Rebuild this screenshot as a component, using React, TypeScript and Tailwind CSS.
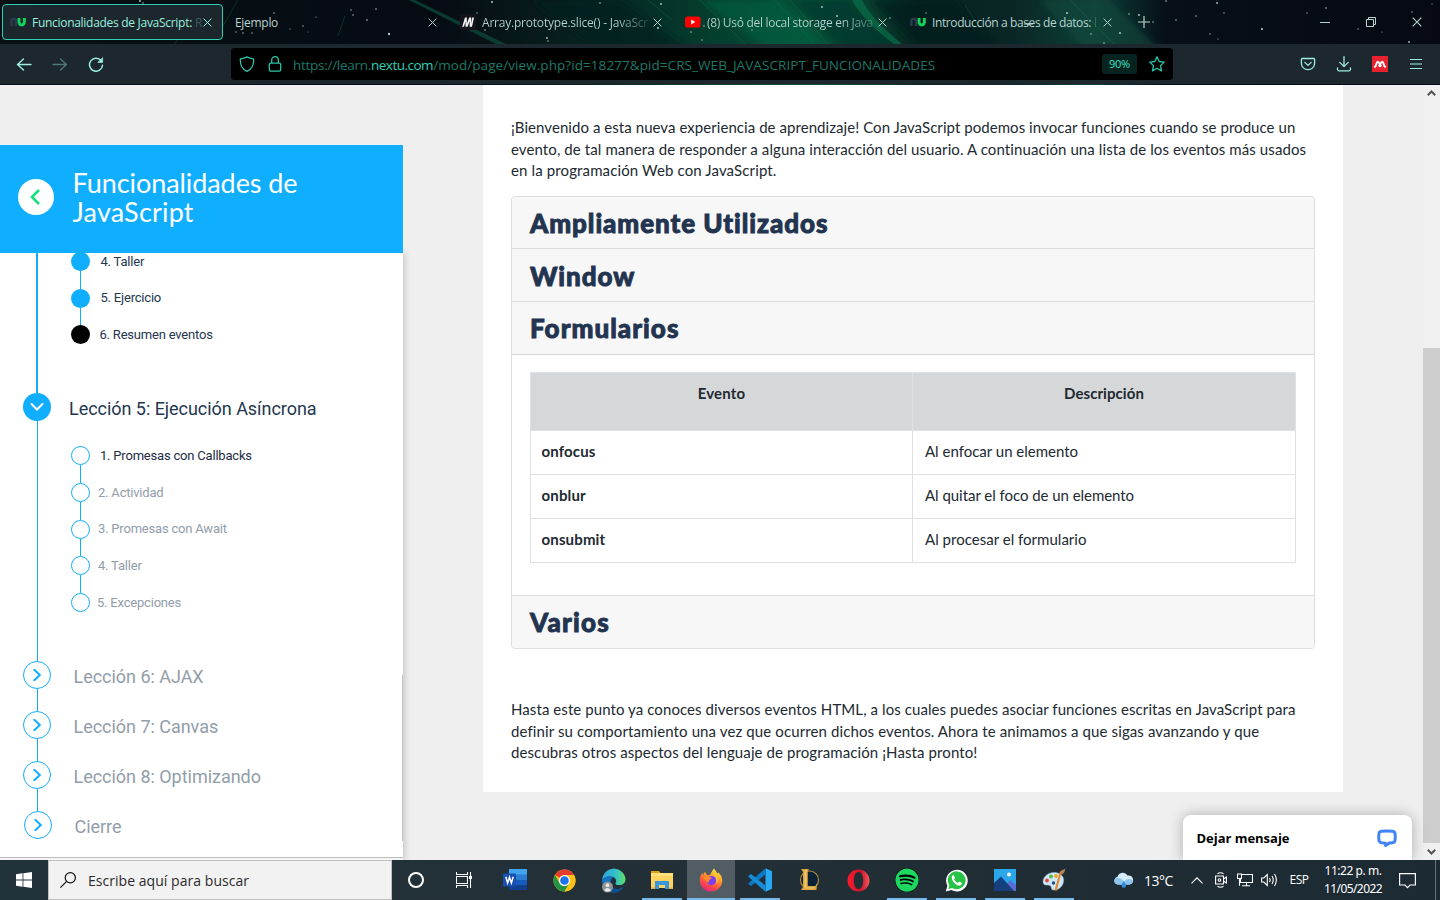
import type { ReactNode } from "react";
import { FaSpotify } from "react-icons/fa6";

const segoe = "font-['Open_Sans','Noto_Sans',sans-serif]";

/* ---------- Browser window ---------- */

const stars: [number, number, number][] = [
  [140, 1, 1.2], [143, 3, 0.9], [274, 13, 0.9], [290, 29, 0.7], [303, 26, 0.8], [316, 17, 0.7], [351, 10, 0.9], [353, 15, 0.9],
  [367, 20, 1], [376, 9, 1], [389, 34, 1.5], [236, 32, 0.8], [243, 33, 0.9], [252, 33, 0.8], [308, 32, 0.6], [492, 2, 1.3], [477, 13, 0.8],
  [485, 30, 1], [547, 38, 1.1], [548, 41, 0.9], [600, 3, 1], [661, 4, 1.2], [658, 28, 1.3], [691, 32, 1], [704, 26, 1], [741, 18, 1.2],
  [702, 40, 0.9], [752, 30, 0.8], [822, 7, 1.2], [837, 16, 1.2], [890, 18, 0.9], [926, 13, 0.8], [1029, 24, 1.2], [1067, 13, 1.3],
  [1091, 34, 0.9], [1120, 33, 1.3], [1104, 43, 1], [1129, 14, 1], [1139, 15, 1.2], [1153, 22, 0.9], [1166, 1, 1], [1176, 20, 0.9],
  [1196, 16, 0.9], [1217, 3, 1.1], [1224, 13, 0.8], [1210, 34, 0.8], [1218, 39, 0.7], [1262, 29, 1.4], [1307, 13, 0.8], [1326, 8, 1],
  [1358, 29, 0.8], [1382, 32, 0.7], [1412, 12, 0.8], [1409, 42, 1.1], [1432, 4, 0.7],
];

function Aurora() {
  return (
    <svg className="absolute inset-0 h-[85px] w-[1440px]" viewBox="0 0 1440 85" preserveAspectRatio="none" aria-hidden="true">
      <defs>
        <linearGradient id="sky" x1="0" x2="1" y1="0" y2="0">
          <stop offset="0" stopColor="#071014" />
          <stop offset="0.3" stopColor="#060b13" />
          <stop offset="0.36" stopColor="#071719" />
          <stop offset="0.44" stopColor="#052c26" />
          <stop offset="0.5" stopColor="#04402f" />
          <stop offset="0.56" stopColor="#055037" />
          <stop offset="0.605" stopColor="#07402f" />
          <stop offset="0.64" stopColor="#072421" />
          <stop offset="0.7" stopColor="#0a2525" />
          <stop offset="0.76" stopColor="#0b4037" />
          <stop offset="0.81" stopColor="#070f17" />
          <stop offset="1" stopColor="#060912" />
        </linearGradient>
        <filter id="soft" x="-5%" y="-20%" width="110%" height="140%">
          <feGaussianBlur stdDeviation="3" />
        </filter>
      </defs>
      <rect width="1440" height="85" fill="url(#sky)" />
      <g filter="url(#soft)">
        <path d="M530 0 L620 0 L690 50 L600 50 Z" fill="#05201f" opacity=".6" />
        <path d="M700 0 L780 0 L832 50 L770 50 Z" fill="#06603f" opacity=".6" />
        <path d="M790 0 L845 0 L905 50 L845 50 Z" fill="#06382c" opacity=".7" />
        <path d="M870 0 L955 0 L1000 50 L920 50 Z" fill="#061d1c" opacity=".7" />
        <path d="M1040 0 L1110 0 L1160 50 L1085 50 Z" fill="#0d4a3d" opacity=".6" />
      </g>
      <path d="M405 -2 L411 -2 L510 46 L500 46 Z" fill="#0c4b39" opacity=".75" />
      <path d="M852 0 L862 0 Q872 20 902 44 L894 44 Q864 22 852 0Z" fill="#0a7d50" opacity=".55" />
      <g stroke="#0f7a54" strokeWidth="1" opacity=".35" fill="none">
        <path d="M790 0 L828 44 M775 0 L815 44 M700 0 L745 44 M648 0 L672 20 M1070 0 L1114 44 M965 5 L980 28 M238 0 L215 40 M345 16 L338 36 M20 40 L30 20 M175 44 L184 28" />
      </g>
      <g fill="#a5c9c4">
        {stars.map(([x, y, r]) => (
          <circle key={`${x}-${y}`} cx={x} cy={y} r={r * 0.8} />
        ))}
      </g>
      <path d="M1024 24 h9" stroke="#b9dcd6" strokeWidth="1" />
    </svg>
  );
}

function NextUIcon() {
  return (
    <svg className="h-4 w-4 shrink-0" viewBox="0 0 16 16" fill="none" aria-hidden="true">
      <path d="M1.4 12 V7 a2.3 2.3 0 0 1 4.6 0 V12" stroke="#2b3a4d" strokeWidth="2.6" />
      <path d="M9 4 V8.3 a2.7 2.6 0 0 0 5.4 0 V4" stroke="#0fd45c" strokeWidth="2.9" />
    </svg>
  );
}

function MdnIcon() {
  return (
    <svg className="h-4 w-4 shrink-0" viewBox="0 0 16 16" aria-hidden="true">
      <rect width="16" height="16" rx="1" fill="#15141a" />
      <path d="M2.200 12.800 5 3.500H6.800L6.900 9.500 9.200 3.500H11.200L11 9.800 12.200 3.500H14L12 12.800H9.600L9.700 7.300 7.500 12.800H5.500L5.600 7.300 4 12.800Z" fill="#f4f4f4" />
    </svg>
  );
}

function YoutubeIcon() {
  return (
    <svg className="h-4 w-4 shrink-0" viewBox="0 0 16 16" aria-hidden="true">
      <rect x="0" y="2.500" width="15.600" height="11" rx="2.600" fill="#f00" />
      <path d="M6.200 5.600 10.300 8 6.200 10.400Z" fill="#fff" />
    </svg>
  );
}

function Cross({ size = "size-[9px]" }: { size?: string }) {
  return (
    <svg className={`${size} shrink-0`} viewBox="0 0 9 9" stroke="currentColor" strokeWidth="1" aria-hidden="true">
      <path d="M.6.6 8.4 8.4M8.4.6.6 8.4" />
    </svg>
  );
}

function Tab({ icon, title, fade, tracking, active }: { icon?: ReactNode; title: string; fade?: string; tracking: string; active?: boolean }) {
  return (
    <div
      className={`flex h-9 w-[221px] shrink-0 items-center rounded border pr-[10px] pl-[7px] text-[12px] ${
        active ? "border-[#2fd0b5] bg-[#1b262d] text-[#9aefdf]" : "border-transparent text-[#b5d3cf]"
      }`}
    >
      {icon && <span className="mr-[6px]">{icon}</span>}
      <span className="flex w-0 grow overflow-hidden pt-[2px] whitespace-nowrap">
        <span className={tracking}>{title}</span>
        {fade && <span className="ml-[3px] opacity-25">{fade}</span>}
      </span>
      <Cross />
    </div>
  );
}

function TitleBar() {
  return (
    <div className="relative flex h-11 shrink-0 items-center gap-1 pl-0.5 text-[#b5d3cf]">
      <Tab active icon={<NextUIcon />} title="Funcionalidades de JavaScript:" fade="R" tracking="tracking-[-0.29px]" />
      <Tab title="Ejemplo" tracking="tracking-[-0.3px]" />
      <Tab icon={<MdnIcon />} title="Array.prototype.slice() - JavaScr" tracking="tracking-[-0.21px] bg-linear-to-r from-[#b5d3cf] from-80% to-[#b5d3cf33] bg-clip-text text-transparent" />
      <Tab icon={<YoutubeIcon />} title="(8) Uso del local storage en Java" tracking="tracking-[-0.3px] bg-linear-to-r from-[#b5d3cf] from-80% to-[#b5d3cf55] bg-clip-text text-transparent" />
      <Tab icon={<NextUIcon />} title="Introducción a bases de datos:" fade="l" tracking="tracking-[-0.39px]" />
      <svg className="ml-[11px] size-3" viewBox="0 0 12 12" stroke="currentColor" strokeWidth="1.200" aria-hidden="true">
        <path d="M6 0V12M0 6H12" />
      </svg>
      <div className="ml-auto flex items-center gap-9 pr-[18px]">
        <span className="h-px w-[10px] bg-current" />
        <svg className="size-[10px]" viewBox="0 0 10 10" fill="none" stroke="currentColor" aria-hidden="true">
          <path d="M.5 2.500H7.500V9.500H.5ZM2.500 2.500V.5H9.500V7.500H7.500" />
        </svg>
        <Cross size="size-[10px]" />
      </div>
    </div>
  );
}

function NavBar() {
  return (
    <div className="relative flex h-10 shrink-0 items-center bg-[#1c272e] text-[#9aefdf]">
      <div className="flex w-[231px] items-center gap-5 pl-4">
        <svg className="size-4" viewBox="0 0 16 16" fill="none" stroke="currentColor" strokeWidth="1.400" strokeLinecap="round" strokeLinejoin="round" aria-hidden="true">
          <path d="M15 8.500H1.500M7.500 3 1.500 8.500 7.500 14" />
        </svg>
        <svg className="size-4 opacity-40" viewBox="0 0 16 16" fill="none" stroke="currentColor" strokeWidth="1.400" strokeLinecap="round" strokeLinejoin="round" aria-hidden="true">
          <path d="M1 8.500H14.500M8.500 3 14.500 8.500 8.500 14" />
        </svg>
        <svg className="size-4" viewBox="0 0 16 16" fill="none" stroke="currentColor" strokeWidth="1.500" strokeLinecap="round" aria-hidden="true">
          <path d="M13.200 4.800A6.500 6.500 0 1 0 14.500 9.200" />
          <path d="M14.600 2V6.400H10.200Z" fill="currentColor" strokeWidth=".8" strokeLinejoin="round" />
        </svg>
      </div>
      <div className="flex h-8 w-[942px] items-center rounded bg-black px-2 text-[#2bc4a8]">
        <svg className="size-4" viewBox="0 0 16 16" fill="none" stroke="currentColor" strokeWidth="1.300" strokeLinejoin="round" aria-hidden="true">
          <path d="M8 .9C10 2 12.500 2.600 14.600 2.900C14.900 8 12.800 13.200 8 15.300C3.200 13.200 1.100 8 1.400 2.900C3.500 2.600 6 2 8 .9Z" />
        </svg>
        <svg className="ml-3 size-4" viewBox="0 0 16 16" fill="none" stroke="currentColor" strokeWidth="1.300" aria-hidden="true">
          <rect x="2.300" y="7.200" width="11.400" height="8" rx="1.600" />
          <path d="M4.700 7V4.200A3.300 3.500 0 0 1 11.300 4.200V7" />
        </svg>
        <div className="ml-[10px] flex pt-px text-[13.5px] leading-8 whitespace-nowrap text-[#1e7868]">
          <span className="tracking-[-0.28px]">https://learn.</span>
          <span className="tracking-[-0.5px] text-[#2fd0b5]">nextu.com</span>
          <span className="tracking-[0.07px]">/mod/page/view.php?id=18277&amp;pid=CRS_WEB_JAVASCRIPT_FUNCIONALIDADES</span>
        </div>
        <span className="ml-auto flex h-5 w-[35px] items-center justify-center rounded-[3px] bg-[#07231f] pt-px text-[11px] tracking-[-0.3px] text-[#3be3c6]">90%</span>
        <svg className="ml-3 size-4" viewBox="0 0 16 16" fill="none" stroke="currentColor" strokeWidth="1.300" strokeLinejoin="round" aria-hidden="true">
          <path d="M8 .9 10.200 5.500 15.200 6.100 11.500 9.600 12.500 14.900 8 12.300 3.500 14.900 4.500 9.600.8 6.100 5.800 5.500Z" />
        </svg>
      </div>
      <div className="ml-auto flex items-center gap-5 pr-4">
        <svg className="size-4" viewBox="0 0 16 16" fill="none" stroke="currentColor" strokeWidth="1.300" strokeLinecap="round" strokeLinejoin="round" aria-hidden="true">
          <path d="M2.300 2.500H13.700Q14.600 2.500 14.600 3.400V7.400A6.600 6.300 0 0 1 1.400 7.400V3.400Q1.400 2.500 2.300 2.500ZM4.800 6.400 8 9.400 11.200 6.400" />
        </svg>
        <svg className="size-4" viewBox="0 0 16 16" fill="none" stroke="currentColor" strokeWidth="1.300" strokeLinecap="round" strokeLinejoin="round" aria-hidden="true">
          <path d="M8 .7V10.500M3.800 6.400 8 10.600 12.200 6.400M1.500 12V13.300Q1.500 14.800 3 14.800H13Q14.500 14.800 14.500 13.300V12" />
        </svg>
        <svg className="size-4" viewBox="0 0 16 16" aria-hidden="true">
          <rect width="16" height="16" fill="#e9222f" />
          <path d="M3.600 10.300Q5 6 5.700 5.700 6.600 5.700 8 8.600 9.400 5.700 10.300 5.700 11 6 12.400 10.300" fill="none" stroke="#fff" strokeWidth="1.900" strokeLinejoin="round" />
          <circle cx="3.100" cy="10.600" r="1.200" fill="#fff" />
          <circle cx="8" cy="9.600" r="1.700" fill="#fff" />
          <circle cx="12.900" cy="10.600" r="1.200" fill="#fff" />
        </svg>
        <svg className="size-4" viewBox="0 0 16 16" stroke="currentColor" strokeWidth="1.200" aria-hidden="true">
          <path d="M2 3.500H14M2 8H14M2 12.500H14" />
        </svg>
      </div>
    </div>
  );
}

/* ---------- Course sidebar ---------- */

type Step = { label: string; indent: string; text: string; dot: string };

function StepList({ steps }: { steps: Step[] }) {
  return (
    <ul className="text-[13px] tracking-[-0.2px]">
      {steps.map((s, i) => (
        <li key={s.label} className="flex h-[36.75px]">
          <span className="flex w-[19px] flex-col items-center">
            <span className={`w-px grow ${i ? "bg-[#10aeff]" : ""}`} />
            <span className={`size-[19px] shrink-0 rounded-full ${s.dot}`} />
            <span className={`w-px grow ${i < steps.length - 1 ? "bg-[#10aeff]" : ""}`} />
          </span>
          <span className={`self-center ${s.indent} ${s.text}`}>{s.label}</span>
        </li>
      ))}
    </ul>
  );
}

const filled = "bg-[#10aeff]";
const hollow = "border border-[#10aeff] bg-white";
const navy = "text-[#24364f]";
const grey = "text-[#929da9]";

const lesson4: Step[] = [
  { label: "4. Taller", indent: "pl-[10.5px]", text: navy, dot: filled },
  { label: "5. Ejercicio", indent: "pl-[10.5px]", text: navy, dot: filled },
  { label: "6. Resumen eventos", indent: "pl-[9.5px]", text: navy, dot: "bg-black" },
];
const lesson5: Step[] = [
  { label: "1. Promesas con Callbacks", indent: "pl-[10px]", text: "text-[#1c2c44]", dot: hollow },
  { label: "2. Actividad", indent: "pl-[8px]", text: grey, dot: hollow },
  { label: "3. Promesas con Await", indent: "pl-[8px]", text: grey, dot: hollow },
  { label: "4. Taller", indent: "pl-[8px]", text: grey, dot: hollow },
  { label: "5. Excepciones", indent: "pl-[7px]", text: grey, dot: hollow },
];

function LockedLesson({ title, last }: { title: string; last?: boolean }) {
  return (
    <div className="flex">
      <div className={`flex w-7 flex-col items-center ${last ? "ml-6" : "ml-[23px]"}`}>
        <span className="flex size-7 items-center justify-center rounded-full border border-[#10aeff]">
          <svg className="size-3" viewBox="0 0 12 12" fill="none" stroke="#10aeff" strokeWidth="2" strokeLinecap="round" aria-hidden="true">
            <path d="M3.300.8 8.800 6 3.300 11.200" />
          </svg>
        </span>
        {!last && <span className="h-[22px] w-px bg-[#10aeff]" />}
      </div>
      <span className={`h-[31px] pl-[22.5px] text-[18px] leading-[31px] tracking-[-0.03px] ${grey}`}>{title}</span>
    </div>
  );
}

function Sidebar() {
  return (
    <aside className="flex w-[403px] shrink-0 flex-col pt-[60px] font-['Roboto',sans-serif]">
      <header className="z-10 flex h-[108px] shrink-0 items-center bg-[#10aeff]">
        <button className="mb-1 ml-[18px] flex size-9 items-center justify-center rounded-full bg-white">
          <svg className="h-4 w-3 -translate-x-px" viewBox="0 0 12 16" fill="none" stroke="#12e07b" strokeWidth="2.600" aria-hidden="true">
            <path d="M10 1 3 8 10 15" />
          </svg>
        </button>
        <h1 className="ml-[18.5px] pb-1 font-['Lato',sans-serif] text-[27px] leading-[29px] text-white">
          <span className="block tracking-[-0.07px]">Funcionalidades de</span>
          <span className="block tracking-[0.2px]">JavaScript</span>
        </h1>
      </header>
      <div className="relative flex min-h-0 grow flex-col overflow-hidden bg-white shadow-[2px_0_6px_rgba(0,0,0,0.16)]">
        <div className="flex h-[140px] shrink-0">
          <span className="ml-9 w-0.5 bg-[#10aeff]" />
          <div className="-mt-[10px] ml-[33px]">
            <StepList steps={lesson4} />
          </div>
        </div>
        <div className="flex h-7 shrink-0 items-center">
          <span className="ml-[23px] flex size-7 items-center justify-center rounded-full bg-[#10aeff]">
            <svg className="size-[14px]" viewBox="0 0 14 14" fill="none" stroke="#fff" strokeWidth="2" strokeLinecap="round" aria-hidden="true">
              <path d="M1.500 4 7 9.500 12.500 4" />
            </svg>
          </span>
          <span className="pt-[3px] pl-[18px] text-[18px] tracking-[-0.04px] text-[#24364f]">Lección 5: Ejecución Asíncrona</span>
        </div>
        <div className="flex h-[240px] shrink-0">
          <span className="ml-[37px] w-px bg-[#10aeff]" />
          <div className="mt-[16.25px] ml-[33px]">
            <StepList steps={lesson5} />
          </div>
        </div>
        <LockedLesson title="Lección 6: AJAX" />
        <LockedLesson title="Lección 7: Canvas" />
        <LockedLesson title="Lección 8: Optimizando" />
        <LockedLesson title="Cierre" last />
        <span className="absolute top-[422px] right-0 h-[166px] w-px bg-[#c4c4c4]" />
        <span className="mt-auto h-[3px] border-t border-[#bcbcbc] bg-[#f5f5f5]" />
      </div>
    </aside>
  );
}

/* ---------- Lesson content ---------- */

function AccordionHeader({ children, className }: { children: string; className: string }) {
  return (
    <h2 className={`flex items-center bg-[#f7f7f7] pl-[18px] font-['Lato',sans-serif] text-[26px] leading-8 font-black text-[#22344f] [-webkit-text-stroke:0.9px_#22344f] ${className}`}>
      {children}
    </h2>
  );
}

const events = [
  { name: "onfocus", text: "Al enfocar un elemento", tracking: "tracking-[0px]" },
  { name: "onblur", text: "Al quitar el foco de un elemento", tracking: "tracking-[-0.04px]" },
  { name: "onsubmit", text: "Al procesar el formulario", tracking: "tracking-[0.02px]" },
];

function Content() {
  return (
    <main className="ml-20 h-[707px] w-[860px] bg-white px-7 pt-8 font-['Lato',sans-serif] text-[15px] leading-[21.5px] text-[#212931]">
      <p className="whitespace-nowrap">
        <span className="block tracking-[0.058px]">¡Bienvenido a esta nueva experiencia de aprendizaje! Con JavaScript podemos invocar funciones cuando se produce un</span>
        <span className="block tracking-[0.097px]">evento, de tal manera de responder a alguna interacción del usuario. A continuación una lista de los eventos más usados</span>
        <span className="block tracking-[0.13px]">en la programación Web con JavaScript.</span>
      </p>
      <section className="mt-[14.5px] overflow-hidden rounded border border-[#dcdddf]">
        <AccordionHeader className="h-[51px] pt-px tracking-[0.94px]">Ampliamente Utilizados</AccordionHeader>
        <AccordionHeader className="h-[53px] border-t border-[#dcdddf] pt-px tracking-[0.95px]">Window</AccordionHeader>
        <AccordionHeader className="h-[53px] border-t border-[#dcdddf] tracking-[1.04px]">Formularios</AccordionHeader>
        <div className="h-[241px] border-t border-[#d5d6d8] px-[18px] pt-[17px]">
          <table className="w-full table-fixed border-collapse">
            <colgroup>
              <col className="w-[382px]" />
              <col />
            </colgroup>
            <thead>
              <tr className="h-[58px] bg-[#d6d7d9] align-top">
                <th className="border border-[#dee2e6] pt-[10px] font-bold tracking-[0.2px]">Evento</th>
                <th className="border border-[#dee2e6] pt-[10px] font-bold tracking-[0.07px]">Descripción</th>
              </tr>
            </thead>
            <tbody>
              {events.map((e) => (
                <tr key={e.name} className="h-11">
                  <td className="border border-[#dee2e6] pb-[2px] pl-[10.5px] font-bold tracking-[0.15px]">{e.name}</td>
                  <td className={`border border-[#dee2e6] pb-[2px] pl-[12px] ${e.tracking}`}>{e.text}</td>
                </tr>
              ))}
            </tbody>
          </table>
        </div>
        <AccordionHeader className="h-[53px] border-t border-[#dcdddf] tracking-[1.2px]">Varios</AccordionHeader>
      </section>
      <p className="mt-[50px] whitespace-nowrap">
        <span className="block tracking-[0.083px]">Hasta este punto ya conoces diversos eventos HTML, a los cuales puedes asociar funciones escritas en JavaScript para</span>
        <span className="block tracking-[0.115px]">definir su comportamiento una vez que ocurren dichos eventos. Ahora te animamos a que sigas avanzando y que</span>
        <span className="block tracking-[0.1px]">descubras otros aspectos del lenguaje de programación ¡Hasta pronto!</span>
      </p>
    </main>
  );
}

function Scrollbar() {
  return (
    <div className="ml-auto flex w-[17px] flex-col items-center bg-[#f0f0f0]">
      <svg className="mt-[5px] h-[6px] w-[9px]" viewBox="0 0 9 6" fill="none" stroke="#555" strokeWidth="2" aria-hidden="true">
        <path d="M.8 5.200 4.500 1.500 8.200 5.200" />
      </svg>
      <span className="mt-[252px] h-[495px] w-full bg-[#cdcdcd]" />
      <svg className="mt-[6px] h-[6px] w-[9px]" viewBox="0 0 9 6" fill="none" stroke="#555" strokeWidth="2" aria-hidden="true">
        <path d="M.8.8 4.500 4.500 8.200.8" />
      </svg>
    </div>
  );
}

function ChatWidget() {
  return (
    <div className="absolute right-7 bottom-0 flex h-[45px] w-[229px] items-center justify-between rounded-t-lg bg-white pt-0.5 pr-[15px] pl-[13.5px] text-[13px] font-bold text-black shadow-[0_0_14px_rgba(0,0,0,0.28)]">
      <span className="tracking-[-0.03px]">Dejar mensaje</span>
      <svg className="h-[19px] w-5" viewBox="0 0 20 19" fill="none" stroke="#4384f5" strokeWidth="3" strokeLinejoin="round" aria-hidden="true">
        <path d="M4.500 2.300Q10 1.500 15.500 2.300Q17.700 2.600 18 4.500Q18.500 8 18 11.500Q17.700 13.400 15.500 13.700L12.300 14.100 8.500 16.400V14.200L4.500 13.700Q2.300 13.400 2 11.500Q1.500 8 2 4.500Q2.300 2.600 4.500 2.300Z" />
      </svg>
    </div>
  );
}

/* ---------- Windows taskbar ---------- */

const WordIcon = (
  <svg className="size-6" viewBox="0 0 24 24" aria-hidden="true">
    <path d="M6 1h18v6H6z" fill="#41a5ee" />
    <path d="M6 6.500h18V12H6z" fill="#2b7cd3" />
    <path d="M6 12h18v5.500H6z" fill="#185abd" />
    <path d="M6 17.500h18V22H6z" fill="#103f91" />
    <rect y="5.500" width="13" height="13" rx="1" fill="#174fb3" />
    <path d="M2.800 8.800 4.600 15 6.500 9.200 8.400 15 10.200 8.800" fill="none" stroke="#fff" strokeWidth="1.500" />
  </svg>
);

const ChromeIcon = (
  <svg className="size-[23px]" viewBox="0 0 48 48" aria-hidden="true">
    <circle cx="24" cy="24" r="23" fill="#fbc116" />
    <path d="M4.100 12.500A23 23 0 0 1 43.900 12.500H24A11.500 11.500 0 0 0 14 18.300Z" fill="#e33b2e" />
    <path d="M4.100 12.500 14 29.700A11.500 11.500 0 0 0 24 35.500L34 29.800 24 47A23 23 0 0 1 4.100 12.500Z" fill="#229342" />
    <path d="M34 29.800 24 47A23 23 0 0 0 43.900 12.500H24A11.500 11.500 0 0 1 34 29.800Z" fill="#fbc116" />
    <circle cx="24" cy="24" r="11.500" fill="#fff" />
    <circle cx="24" cy="24" r="9" fill="#1a73e8" />
  </svg>
);

const EdgeIcon = (
  <svg className="size-[25px]" viewBox="0 0 25 25" aria-hidden="true">
    <defs>
      <linearGradient id="edgeTop" x1="0" x2="1">
        <stop offset="0" stopColor="#2ba5e0" />
        <stop offset=".6" stopColor="#35c1c9" />
        <stop offset="1" stopColor="#5ee265" />
      </linearGradient>
    </defs>
    <path d="M1 13A11.800 11.800 0 0 1 24.500 11C24.500 15 21.500 17 18.500 17 15.500 17 14 16 14.500 15 16 13 15 10 12 9 7 7.500 2 10 1 13Z" fill="url(#edgeTop)" />
    <path d="M1 13C2 9 8 7.500 12 9.500 8.500 11 8.500 19 14 21 17.500 22 21 20 22.500 18.500 20 23 16 24.500 13 24.500A12 12 0 0 1 1 13Z" fill="#1473c4" />
    <path d="M9.800 13C8.500 18 12 22 16 21.500 19 21.300 21.500 20 22.500 18.500 19 26 9 26 7 20 6 16.500 8 14 9.800 13Z" fill="#0c4f8f" />
    <circle cx="6.500" cy="19" r="5.500" fill="#8f9396" />
    <circle cx="6.500" cy="17.200" r="1.900" fill="#e9e9e9" />
    <path d="M3 22.300Q6.500 17.700 10 22.300Q6.500 25 3 22.300Z" fill="#e9e9e9" />
  </svg>
);

const ExplorerIcon = (
  <svg className="h-5 w-[22px]" viewBox="0 0 22 20" aria-hidden="true">
    <path d="M0 1h8l1.500 2H0z" fill="#e0a013" />
    <path d="M0 3h22v15H0z" fill="#ffd35f" />
    <path d="M0 3h22v3H0z" fill="#ffdf7e" />
    <path d="M4 11h14v8h-4v-4H8v4H4z" fill="#3b97dc" />
    <path d="M0 17.500h4V19H0zM18 17.500h4V19h-4z" fill="#e9b03a" />
  </svg>
);

const FirefoxIcon = (
  <svg className="size-6" viewBox="0 0 24 24" aria-hidden="true">
    <defs>
      <linearGradient id="fox" x1=".8" y1="0" x2=".3" y2="1">
        <stop offset="0" stopColor="#fff04f" />
        <stop offset=".35" stopColor="#ffa62b" />
        <stop offset=".65" stopColor="#ff5b3a" />
        <stop offset="1" stopColor="#e9217c" />
      </linearGradient>
    </defs>
    <path d="M15 .5C17 3 17.500 4 18.500 5.500L19.500 4.500C22 7 23.500 10 23.300 13 22.800 19 18 23.500 12 23.500 5.500 23.500.8 18.500.8 12.500.8 9 2 6.500 3.500 4.800L4.200 7 6 3.800 8 7 11 7C12 5 13 3 15 .5Z" fill="url(#fox)" />
    <circle cx="12.500" cy="12.600" r="4.600" fill="#7a3ff2" />
    <path d="M4.500 9C8 7.800 11 8.500 13 10 11.500 11 9.500 12 10 14.500 7 13.500 5.500 12 4.500 9Z" fill="#ff8a2d" />
    <path d="M14 6.500C17 8.500 18.500 12 17 15.500 19.800 13.500 20.500 9.500 17 6Z" fill="#ffc53a" />
  </svg>
);

const CodeIcon = (
  <svg className="size-6" viewBox="0 0 24 24" aria-hidden="true">
    <path d="M17.500.3 24 3.300V20.700L17.500 23.700Z" fill="#2aa9f3" />
    <path d="M17.500 6.500 3 18 .4 16 .4 15.300 17.500.3Z" fill="#0a78c4" />
    <path d="M17.500 17.500 3 6 .4 8 .4 8.700 17.500 23.700Z" fill="#168bd8" />
  </svg>
);

const LeagueIcon = (
  <svg className="size-6" viewBox="0 0 24 24" aria-hidden="true">
    <circle cx="12.500" cy="12" r="9" fill="#0a2233" stroke="#b08a3e" strokeWidth="1.200" />
    <path d="M4 1H12L10.800 3.500V18H18.500L20 15.500 19.500 22H4L6 19V4Z" fill="#d9a441" />
    <path d="M7.500 2H10.300L9.500 4V19.500H18L17.500 20.500H7.500Z" fill="#f0c869" />
  </svg>
);

const OperaIcon = (
  <svg className="size-[23px]" viewBox="0 0 23 23" aria-hidden="true">
    <defs>
      <linearGradient id="opera" x1="0" x2="1">
        <stop offset="0" stopColor="#ff1b2d" />
        <stop offset=".6" stopColor="#c8142a" />
        <stop offset="1" stopColor="#f5575b" />
      </linearGradient>
    </defs>
    <path fillRule="evenodd" d="M11.500.5A11 11 0 1 1 11.500 22.500 11 11 0 1 1 11.500.5ZM11.500 3C8.500 3 6.800 7 6.800 11.500S8.500 20 11.500 20 16.200 16 16.200 11.500 14.500 3 11.500 3Z" fill="url(#opera)" />
  </svg>
);

const WhatsappIcon = (
  <svg className="size-[23px]" viewBox="0 0 24 24" aria-hidden="true">
    <path d="M.8 23.500 2.500 17.500A11.300 11.300 0 1 1 6.800 21.900Z" fill="#fff" />
    <path d="M3.500 20.800 4.500 17A9.300 9.300 0 1 1 7.500 19.800Z" fill="#27c246" />
    <path d="M7.200 7.300C8 6.200 9.300 6.300 9.600 7.300L10.300 9C10.500 9.800 9.800 10.200 9.400 10.700 10.500 12.800 11.700 13.800 13.500 14.500 14 14 14.600 12.900 15.300 13.300L17.400 14.400C18 14.900 17.200 17 15.500 17.300 12 17.800 6 12.500 7.200 7.300Z" fill="#fff" />
  </svg>
);

const PhotosIcon = (
  <svg className="size-[22px]" viewBox="0 0 22 22" aria-hidden="true">
    <rect width="22" height="22" fill="#2aa7ea" />
    <path d="M8 22 16 11 22 16V22Z" fill="#5a6fd6" />
    <path d="M0 14 7 7.500 20 22H0Z" fill="#163f7d" />
    <circle cx="15" cy="5.500" r="2" fill="#f3faff" />
  </svg>
);

const PaintIcon = (
  <svg className="size-6" viewBox="0 0 24 24" aria-hidden="true">
    <path d="M1 14C1 8 7 4 13 4.500 19 5 22.500 9 21.500 14 20.500 19 16 22.500 11 22 8.500 21.500 10 18.500 8 17.500 5.500 16.500 1.500 18.500 1 14Z" fill="#cfe6f7" stroke="#8fb4d2" strokeWidth=".5" />
    <circle cx="5" cy="12.500" r="1.900" fill="#e0483b" />
    <circle cx="9" cy="8.500" r="1.900" fill="#5cb83f" />
    <circle cx="14" cy="8" r="1.900" fill="#f2a622" />
    <circle cx="11.500" cy="15" r="1.700" fill="#1f4b78" />
    <path d="M19.500 5 14.500 23 12.500 22 17.500 5Z" fill="#e58a2b" />
    <path d="M17.300 5.500C17.500 3 20 2.500 23.500.5 22.500 3.500 22 6 19.800 6.500Z" fill="#b8834f" />
  </svg>
);

const apps: { name: string; icon: ReactNode; open?: boolean; focused?: boolean }[] = [
  { name: "Word", icon: WordIcon },
  { name: "Chrome", icon: ChromeIcon },
  { name: "Edge", icon: EdgeIcon },
  { name: "Explorador", icon: ExplorerIcon, open: true },
  { name: "Firefox", icon: FirefoxIcon, open: true, focused: true },
  { name: "Code", icon: CodeIcon, open: true },
  { name: "League", icon: LeagueIcon },
  { name: "Opera", icon: OperaIcon },
  { name: "Spotify", icon: <span className="rounded-full bg-black"><FaSpotify className="size-6 text-[#1ed760]" /></span>, open: true },
  { name: "WhatsApp", icon: WhatsappIcon, open: true },
  { name: "Fotos", icon: PhotosIcon, open: true },
  { name: "Paint", icon: PaintIcon, open: true },
];

function Taskbar() {
  return (
    <footer className="flex h-10 shrink-0 bg-linear-to-r from-[#22323a] via-[#232f36] to-[#1c2a33] text-white">
      <div className="flex w-12 items-center justify-center">
        <svg className="size-4" viewBox="0 0 16 16" fill="#fff" aria-hidden="true">
          <path d="M0 2.200 6.600 1.300V7.600H0ZM7.400 1.200 16 0V7.600H7.400ZM0 8.400H6.600V14.700L0 13.800ZM7.400 8.400H16V16L7.400 14.800Z" />
        </svg>
      </div>
      <div className="flex w-[344px] items-center border border-[#bfbfbf] bg-[#f2f2f2] pl-[11px] text-[14px] text-[#2b2b2b]">
        <svg className="size-4" viewBox="0 0 16 16" fill="none" stroke="#111" strokeWidth="1.200" aria-hidden="true">
          <circle cx="10.300" cy="5.700" r="5.100" />
          <path d="M6.600 9.400.4 15.600" />
        </svg>
        <span className="pl-3 tracking-[0.04px]">Escribe aquí para buscar</span>
      </div>
      <div className="flex w-12 items-center justify-center">
        <span className="size-4 rounded-full border-2 border-white" />
      </div>
      <div className="flex w-[51px] items-center justify-center pr-[3px]">
        <svg className="size-4" viewBox="0 0 16 16" fill="none" stroke="#fff" strokeWidth="1.100" aria-hidden="true">
          <path d="M.5 4.500H11.500V11.500H.5ZM.5 0V2.500H11.500V0M.5 16V13.500H11.500V16M14.500 0V16" />
          <path d="M13 4H16V7H13Z" fill="#fff" stroke="none" />
        </svg>
      </div>
      <div className="flex">
        {apps.map((a) => (
          <div key={a.name} className="flex w-[49px] flex-col items-center pr-px">
            <div className={`flex h-[38px] w-full items-center justify-center pt-0.5 ${a.focused ? "bg-[#525c63]" : ""}`}>{a.icon}</div>
            {a.open && <span className={`h-0.5 bg-[#76b9ed] ${a.focused ? "w-full" : "w-10"}`} />}
          </div>
        ))}
      </div>
      <div className="ml-auto flex items-center pr-1">
        <svg className="h-4 w-[21px]" viewBox="0 0 21 16" aria-hidden="true">
          <path d="M4.500 12.500A4 4 0 0 1 4.500 4.800 5.500 5.500 0 0 1 14.500 3.500 4.600 4.600 0 0 1 16.500 12.500Z" fill="#d4ecfb" />
          <path d="M4.500 12.500A3.600 3.600 0 0 1 2 6.500Q8 4.500 11 10 14 5 20.300 8.500A4.500 4.500 0 0 1 16.500 12.500Z" fill="#8cc5ee" />
          <path d="M10.800 9Q13.800 13 12.800 14.500A2.200 2.200 0 0 1 8.800 14.500Q7.800 13 10.800 9Z" fill="#2f8ce0" />
        </svg>
        <span className="w-[47px] pt-px pl-[10px] text-[14px] tracking-[-0.46px] whitespace-nowrap">13°C</span>
        <svg className="ml-[10px] h-[7px] w-3" viewBox="0 0 12 7" fill="none" stroke="#fff" strokeWidth="1.200" aria-hidden="true">
          <path d="M.5 6.400 6 .9 11.500 6.400" />
        </svg>
        <svg className="ml-3 h-4 w-3" viewBox="0 0 12 16" fill="none" stroke="#fff" strokeWidth="1.100" aria-hidden="true">
          <path d="M.6 4H8.500V12H.6ZM8.500 7 11.400 5V11L8.500 9M2.500 1.800Q5.500-.3 8.500 1.800M2.500 14.200Q5.500 16.300 8.500 14.200" />
          <circle cx="4.500" cy="8" r="1.300" />
        </svg>
        <svg className="ml-[10px] h-4 w-4" viewBox="0 0 16 16" fill="none" stroke="#fff" strokeWidth="1.100" aria-hidden="true">
          <path d="M4.500 2.500H15.500V10.500H3.500V6.500M.5 2H4.500V6.500H.5ZM9.500 10.500V13.500M5 13.800H13M2.500 6.500V13.800" />
        </svg>
        <svg className="ml-2 h-[14px] w-[17px]" viewBox="0 0 17 14" fill="none" stroke="#fff" strokeWidth="1.100" aria-hidden="true">
          <path d="M.6 5H2.800L6.300 1.500V12.500L2.800 9H.6ZM8.500 5Q9.800 7 8.500 9M11 3Q13.500 7 11 11M13.500 1Q17.200 7 13.500 13" />
        </svg>
        <span className="w-[42px] text-center text-[12px] tracking-[-0.45px]">ESP</span>
        <div className="flex w-[66px] flex-col items-center font-['Noto_Sans',sans-serif] text-[12px] leading-[18px] whitespace-nowrap">
          <span className="tracking-[-0.45px]">11:22 p. m.</span>
          <span className="tracking-[-0.58px]">11/05/2022</span>
        </div>
        <svg className="ml-[13px] h-[17px] w-[17px]" viewBox="0 0 17 17" fill="none" stroke="#fff" strokeWidth="1.200" aria-hidden="true">
          <path d="M.6 1.600H16.400V13H11L8.500 15.600 6 13H.6Z" />
        </svg>
        <span className="ml-[19px] h-10 w-px bg-[#66727a]" />
      </div>
    </footer>
  );
}

export default function App() {
  return (
    <div className={`relative flex h-[900px] w-[1440px] flex-col overflow-hidden ${segoe}`}>
      <Aurora />
      <TitleBar />
      <NavBar />
      <div className="relative mt-px flex h-[775px] shrink-0 overflow-hidden bg-[#efefef]">
        <Sidebar />
        <Content />
        <Scrollbar />
        <ChatWidget />
      </div>
      <Taskbar />
    </div>
  );
}
